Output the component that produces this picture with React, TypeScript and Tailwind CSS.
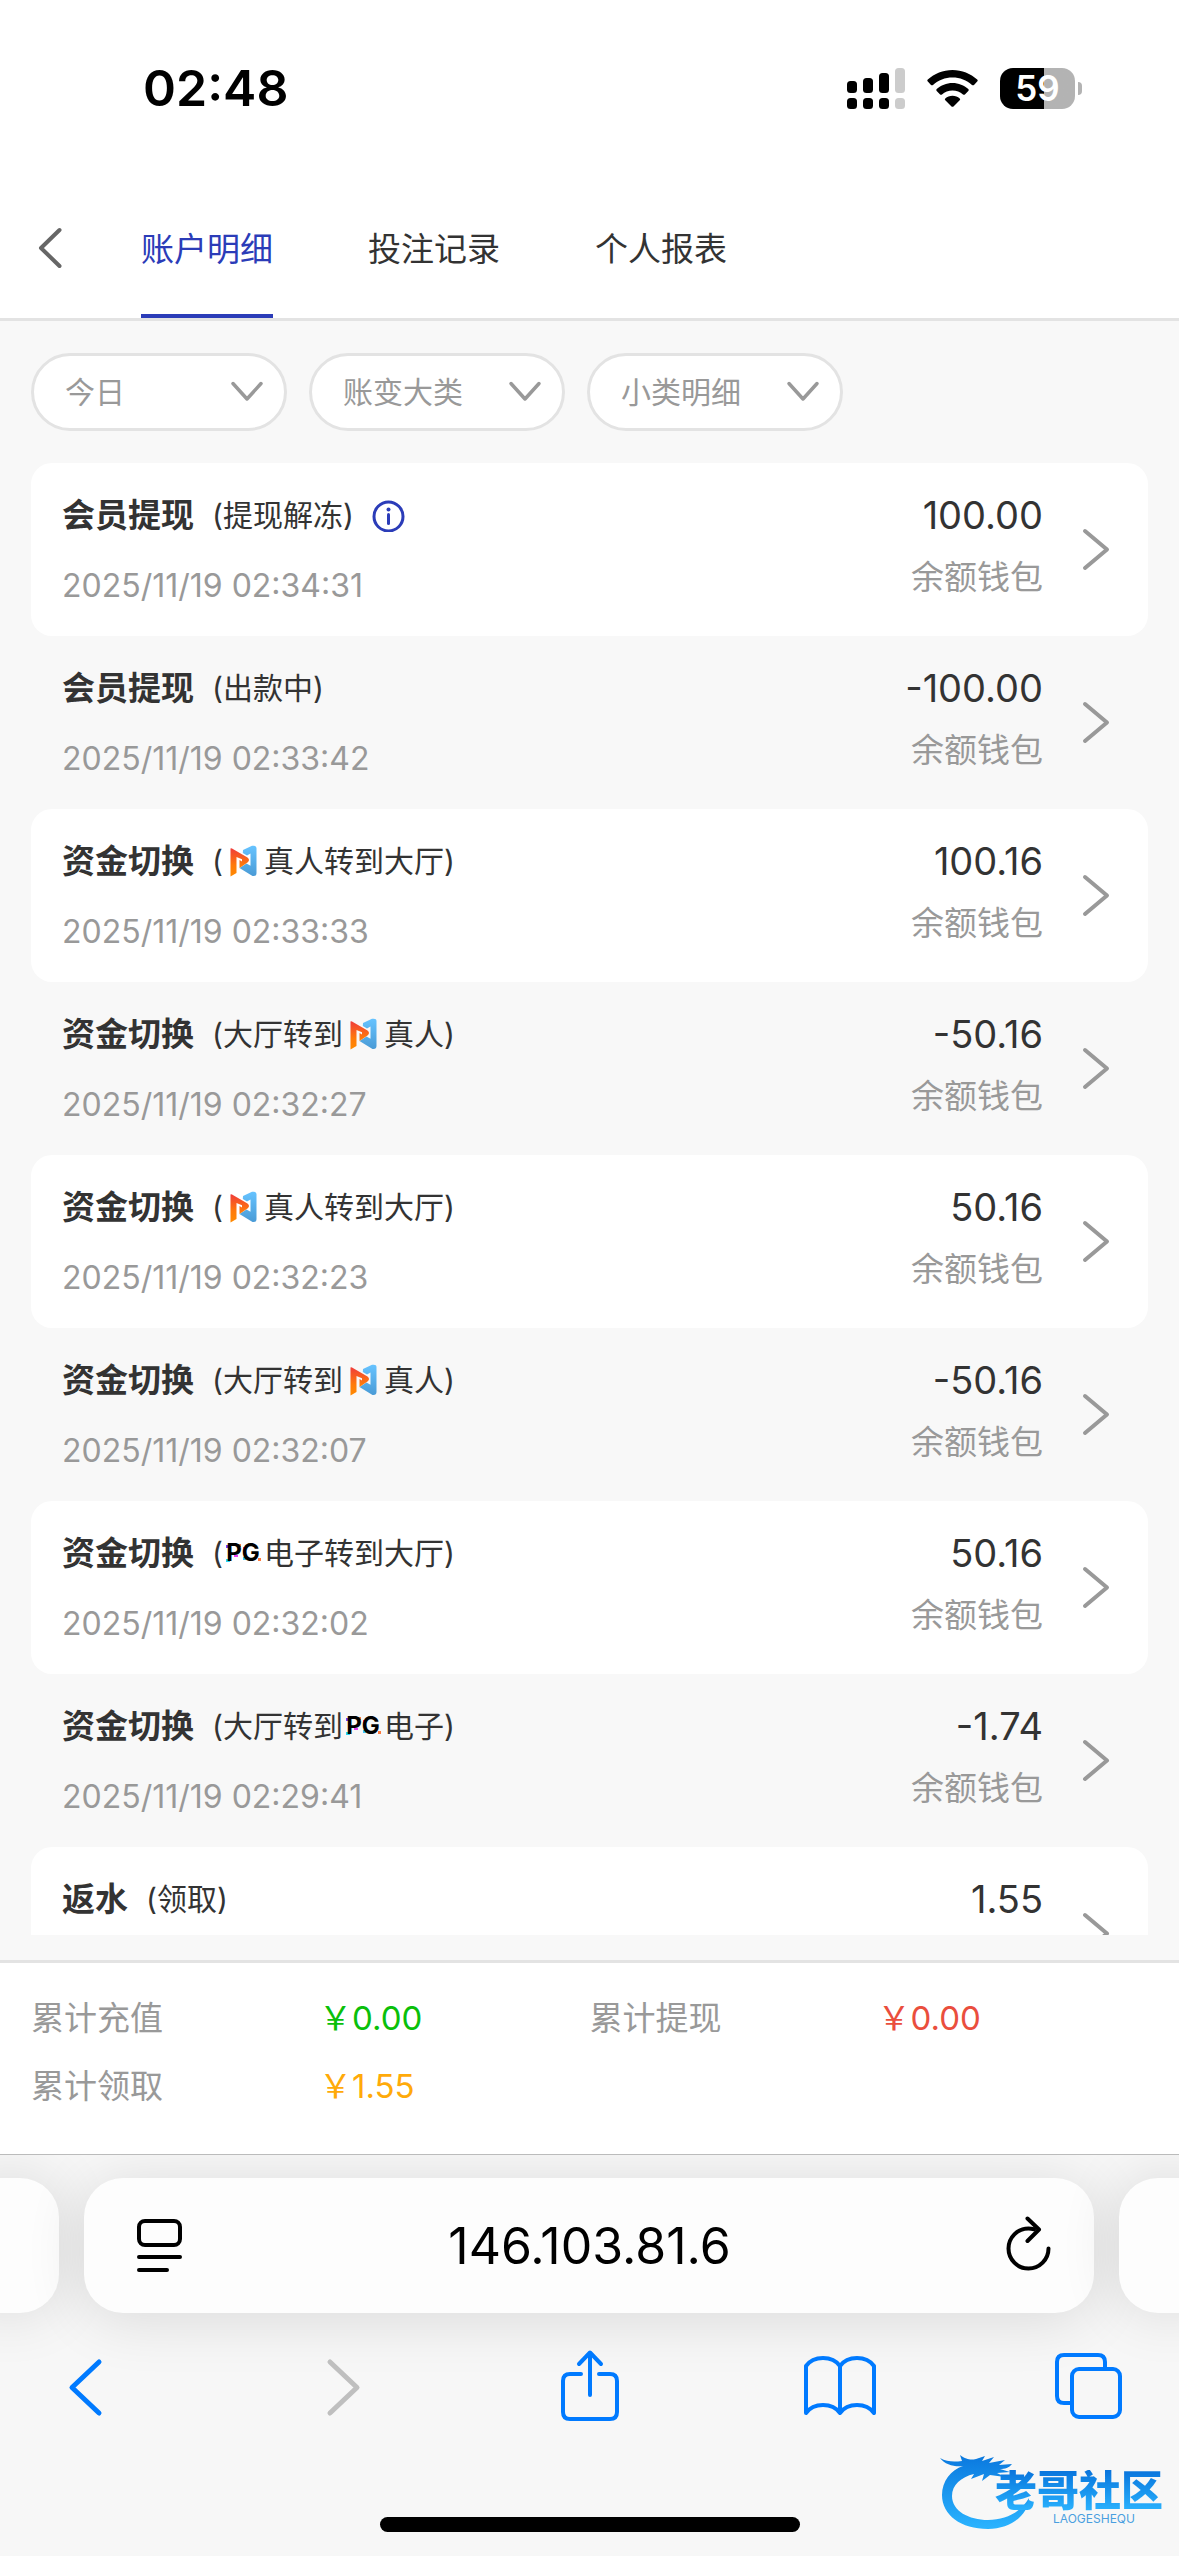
import { useState, type ReactNode } from "react";
import clsx from "clsx";

type Provider = "live" | "pg";

type Transaction = {
  title: string;
  before?: string;
  provider?: Provider;
  after?: string;
  hasInfo?: boolean;
  time: string;
  amount: string;
};

const TABS = ["账户明细", "投注记录", "个人报表"];

const FILTERS = [
  { id: "date", label: "日期", value: "今日" },
  { id: "category", label: "大类", value: "账变大类" },
  { id: "subcategory", label: "小类", value: "小类明细" },
];

const TRANSACTIONS: Transaction[] = [
  { title: "会员提现", before: "提现解冻", hasInfo: true, time: "2025/11/19 02:34:31", amount: "100.00" },
  { title: "会员提现", before: "出款中", time: "2025/11/19 02:33:42", amount: "-100.00" },
  { title: "资金切换", provider: "live", after: "真人转到大厅", time: "2025/11/19 02:33:33", amount: "100.16" },
  { title: "资金切换", before: "大厅转到", provider: "live", after: "真人", time: "2025/11/19 02:32:27", amount: "-50.16" },
  { title: "资金切换", provider: "live", after: "真人转到大厅", time: "2025/11/19 02:32:23", amount: "50.16" },
  { title: "资金切换", before: "大厅转到", provider: "live", after: "真人", time: "2025/11/19 02:32:07", amount: "-50.16" },
  { title: "资金切换", provider: "pg", after: "电子转到大厅", time: "2025/11/19 02:32:02", amount: "50.16" },
  { title: "资金切换", before: "大厅转到", provider: "pg", after: "电子", time: "2025/11/19 02:29:41", amount: "-1.74" },
  { title: "返水", before: "领取", time: "", amount: "1.55" },
];

const TOTALS = [
  { label: "累计充值", value: "0.00", color: "text-[#0abf0a]" },
  { label: "累计提现", value: "0.00", color: "text-[#ea4e3d]" },
  { label: "累计领取", value: "1.55", color: "text-[#ffaa09]" },
];

function StatusBar() {
  return (
    <div className="flex h-[177px] shrink-0 items-start justify-between pt-[58px] pr-[97px] pl-[143px]">
      <span className="text-[50px] leading-[60px] font-semibold text-black">02:48</span>
      <div className="flex h-[60px] items-center gap-[22px]">
        <svg width="58" height="41" viewBox="0 0 58 41" aria-hidden="true">
          <rect x="0" y="13" width="10" height="12" rx="3.5" />
          <rect x="16" y="10" width="10" height="15" rx="3.5" />
          <rect x="32" y="5" width="10" height="20" rx="3.5" />
          <rect x="48" y="0" width="10" height="25" rx="3.5" fill="#ccc" />
          <rect x="0" y="30" width="10" height="11" rx="3.5" />
          <rect x="16" y="30" width="10" height="11" rx="3.5" />
          <rect x="32" y="30" width="10" height="11" rx="3.5" />
          <rect x="48" y="30" width="10" height="11" rx="3.5" fill="#ccc" />
        </svg>
        <svg width="51" height="37" viewBox="0 0 51 37" aria-hidden="true">
          <path d="M25.500 0C35 0 43.600 3.600 50.200 9.600Q51.200 10.600 50.200 11.600L47 14.900Q46 15.800 45 14.900C39.700 10.200 32.900 7.600 25.500 7.600S11.300 10.200 6 14.900Q5 15.800 4 14.900L.8 11.600Q-.2 10.600.8 9.600C7.400 3.600 16 0 25.500 0Z" />
          <path d="M25.500 12.900C31.600 12.900 37.100 15.200 41.300 19Q42.300 20 41.300 21L37.900 24.400Q37 25.300 36 24.400C33.200 22 29.500 20.500 25.500 20.500S17.800 22 15 24.400Q14 25.300 13.100 24.400L9.700 21Q8.700 20 9.700 19C13.900 15.200 19.400 12.900 25.500 12.900Z" />
          <path d="M25.500 25.700C28.300 25.700 30.800 26.700 32.700 28.400Q33.600 29.300 32.700 30.200L26.500 36.400Q25.500 37.300 24.500 36.400L18.300 30.200Q17.400 29.300 18.300 28.400C20.200 26.700 22.700 25.700 25.500 25.700Z" />
        </svg>
        <div className="flex items-center gap-[3px]">
          <div className="flex h-[41px] w-[75px] items-center justify-center rounded-[13px] bg-linear-to-r from-black from-59% to-[#b3b3b3] to-59% text-[35px] leading-[41px] font-semibold text-white">
            59
          </div>
          <div className="h-[13px] w-[4px] rounded-r-full bg-[#b3b3b3]" />
        </div>
      </div>
    </div>
  );
}

function LiveLogo() {
  return (
    <svg className="mx-[7px] h-[32px] w-[27px] shrink-0" viewBox="0 0 27 32" aria-hidden="true">
      <defs>
        <linearGradient id="live-blue" x1="0" y1="0" x2="0" y2="1">
          <stop offset="0" stopColor="#66c3ff" />
          <stop offset="1" stopColor="#4a9bd6" />
        </linearGradient>
        <linearGradient id="live-red" x1="0" y1="0" x2="0" y2="1">
          <stop offset="0" stopColor="#f03c3a" />
          <stop offset="0.600" stopColor="#ff7a0a" />
          <stop offset="1" stopColor="#ff8a00" />
        </linearGradient>
      </defs>
      <path d="M13 5L22 .8Q26.500 0 26.500 3V28Q26.500 31.500 22.500 31L9.500 23L16.500 18.500L20.500 20.800V8.500L17 10.500L12.800 8Z" fill="url(#live-blue)" />
      <path d="M.5 3.500Q1 3 2 3.500L17.500 12.500Q20.500 15 17.500 17.500L9.500 23V15L12 16.500V14.200L6.500 12V28L.5 31.500Z" fill="url(#live-red)" />
    </svg>
  );
}

function PgLogo() {
  return (
    <svg className="h-[32px] w-[41px] shrink-0" viewBox="0 0 41 32" role="img" aria-label="PG">
      <path d="M3 8h4v3h-4z" fill="#7a3cff" />
      <path d="M14 7h4v3h-4z" fill="#ff7a3c" />
      <path d="M3 22h4v3h-4z" fill="#29d3f5" />
      <path d="M11 18h4v2h-4z" fill="#e83cf0" />
      <path d="M25 6h4v3h-4z" fill="#ffd43c" />
      <path d="M20 10h3v4h-3z" fill="#ff3c8c" />
      <path d="M20 20h3v3h-3z" fill="#3cc4ff" />
      <path d="M35 21h3v3h-3z" fill="#ff7a3c" />
      <text x="20" y="24" textAnchor="middle" className="fill-black text-[24px] font-bold">
        PG
      </text>
    </svg>
  );
}

function TransactionRow({ item, striped }: { item: Transaction; striped: boolean }) {
  return (
    <li
      className={clsx(
        "flex shrink-0 items-center rounded-[21px] pt-[28px] pr-[36px] pb-[26px] pl-[31px]",
        striped && "bg-white",
      )}
    >
      <div className="flex min-w-0 flex-1 flex-col gap-[23px]">
        <div className="flex h-[48px] items-center text-[#333]">
          <h2 className="mr-[18px] text-[33px] leading-[48px] font-bold">{item.title}</h2>
          <div className="flex items-center text-[30px] leading-[48px]">
            <span>({item.before}</span>
            {item.provider === "live" ? <LiveLogo /> : null}
            {item.provider === "pg" ? <PgLogo /> : null}
            <span>{item.after})</span>
          </div>
          {item.hasInfo ? (
            <button type="button" aria-label="说明" className="ml-[18px]">
              <svg width="33" height="33" viewBox="0 0 33 33" fill="none" stroke="#2b3cb8" aria-hidden="true">
                <circle cx="16.500" cy="17.500" r="14.500" strokeWidth="3" />
                <path d="M16.500 15.500v9" strokeWidth="3" strokeLinecap="round" />
                <circle cx="16.500" cy="10.500" r="2" fill="#2b3cb8" stroke="none" />
              </svg>
            </button>
          ) : null}
        </div>
        <time className="h-[48px] text-[32px] leading-[48px] text-[#999]">{item.time}</time>
      </div>
      <div className="flex flex-col gap-[14px] self-start text-right">
        <span className="text-[38px] leading-[48px] text-[#333]">{item.amount}</span>
        <span className="text-[33px] leading-[48px] text-[#999]">余额钱包</span>
      </div>
      <button type="button" aria-label="查看详情" className="ml-[38px]">
        <svg width="31" height="45" viewBox="0 0 31 45" fill="none" stroke="#999" strokeWidth="4" strokeLinecap="round" strokeLinejoin="round" aria-hidden="true">
          <path d="M4 3L26 21.500L4 40" />
        </svg>
      </button>
    </li>
  );
}

function BrandMark() {
  return (
    <div className="absolute right-[16px] bottom-[22px] flex h-[82px] w-[224px] justify-end">
      <svg className="absolute top-0 left-0" width="100" height="82" viewBox="0 0 100 82" aria-hidden="true">
        <defs>
          <linearGradient id="brand-blue" x1="0" y1="0" x2="0" y2="1">
            <stop offset="0" stopColor="#0a78de" />
            <stop offset="1" stopColor="#2bb4ff" />
          </linearGradient>
        </defs>
        <path
          d="M1 6C8 10 15 10 23 9L21 3C28 8 32 8 37 7L46 4L43 9L55 5L50 11L66 8L60 13L73 12C70 16 66 17 61 17L71 20L58 21L66 25L51 23L43 29L45 22L32 27L35 22C22 25 13 33 13 44C13 59 30 68 49 68C67 68 82 60 90 46C89 63 72 77 49 77C22 77 3 63 3 43C3 29 12 18 24 14C16 15 6 13 1 6Z"
          fill="url(#brand-blue)"
        />
      </svg>
      <div className="relative flex flex-col items-center pt-[18px]">
        <span className="bg-linear-to-b from-[#0a74dc] to-[#2bb4ff] bg-clip-text text-[42px] leading-[42px] font-black text-transparent">
          老哥社区
        </span>
        <span className="pl-[30px] text-[12px] leading-[14px] text-[#4a9fe0]">LAOGESHEQU</span>
      </div>
    </div>
  );
}

function ToolbarButton({ label, disabled, children }: { label: string; disabled?: boolean; children: ReactNode }) {
  return (
    <button type="button" aria-label={label} disabled={disabled} className="text-[#007aff] disabled:text-[#bfbfbf]">
      <svg width="76" height="76" viewBox="0 0 76 76" fill="none" stroke="currentColor" strokeWidth="4" strokeLinecap="round" strokeLinejoin="round" aria-hidden="true">
        {children}
      </svg>
    </button>
  );
}

function BrowserBar() {
  return (
    <footer className="relative shrink-0 overflow-hidden border-t border-[#bbb] bg-[#f7f7f7]">
      <div className="flex justify-center gap-[25px] pt-[23px]">
        <div className="-ml-[40px] h-[135px] w-[99px] shrink-0 rounded-[39px] bg-[#fdfdfd] shadow-[0_0_60px_rgba(0,0,0,0.12)]" />
        <div className="flex h-[135px] flex-1 items-center rounded-[39px] bg-[#fdfdfd] pr-[40px] pl-[50px] shadow-[0_6px_60px_rgba(0,0,0,0.12)]">
          <button type="button" aria-label="页面菜单">
            <svg width="51" height="60" viewBox="0 0 51 60" fill="none" stroke="#000" strokeWidth="4" strokeLinecap="round" aria-hidden="true">
              <rect x="5" y="5" width="41" height="24" rx="6" />
              <path d="M5 41h41M5 54h28" />
            </svg>
          </button>
          <input
            type="text"
            aria-label="网址"
            defaultValue="146.103.81.6"
            className="min-w-0 flex-1 pr-[9px] text-center text-[50px] leading-[60px] text-black outline-none"
          />
          <button type="button" aria-label="重新载入">
            <svg width="51" height="60" viewBox="0 0 51 60" fill="none" stroke="#000" strokeWidth="4" strokeLinecap="round" strokeLinejoin="round" aria-hidden="true">
              <path d="M31 13.200C29 12.700 27.500 12.500 25.500 12.500A20 20 0 1 0 45.500 32.500" />
              <path d="M24.500 2.500L36 13.500L24.500 25" />
            </svg>
          </button>
        </div>
        <div className="-mr-[40px] h-[135px] w-[100px] shrink-0 rounded-[39px] bg-[#fdfdfd] shadow-[0_0_60px_rgba(0,0,0,0.12)]" />
      </div>
      <div className="flex justify-between px-[50px] pt-[36px]">
        <ToolbarButton label="后退">
          <path d="M49 13L22 38.500L49 64" strokeWidth="5" />
        </ToolbarButton>
        <ToolbarButton label="前进" disabled>
          <path d="M29 13L56 38.500L29 64" strokeWidth="5" />
        </ToolbarButton>
        <ToolbarButton label="分享">
          <path d="M29 25H18Q11 25 11 32V63Q11 70 18 70H58Q65 70 65 63V32Q65 25 58 25H47" />
          <path d="M38 46V4M27 15L38 3.500L49 15" />
        </ToolbarButton>
        <ToolbarButton label="书签">
          <path d="M38 17C33 10 26 9 21 9S9 10 4 17V64C9 57 16 56 21 56S33 57 38 64C43 57 50 56 55 56S67 57 72 64V17C67 10 60 9 55 9S43 10 38 17ZM38 17V64" />
        </ToolbarButton>
        <ToolbarButton label="标签页">
          <path d="M18 54H11Q4 54 4 47V13Q4 6 11 6H45Q52 6 52 13V20" />
          <rect x="19" y="20" width="48" height="48" rx="7" />
        </ToolbarButton>
      </div>
      <div className="flex justify-center pt-[92px] pb-[24px]">
        <div className="h-[15px] w-[420px] rounded-full bg-black" />
      </div>
      <BrandMark />
    </footer>
  );
}

export default function App() {
  const [activeTab, setActiveTab] = useState(TABS[0]);

  return (
    <div className="flex h-screen flex-col overflow-hidden bg-[#f8f8f8] font-['Inter','Noto_Sans_CJK_SC',sans-serif]">
      <header className="shrink-0 border-b-[3px] border-[#e3e3e3] bg-white">
        <StatusBar />
        <nav className="flex h-[141px] items-stretch">
          <button type="button" aria-label="返回" className="mr-[76px] ml-[35px]">
            <svg width="30" height="45" viewBox="0 0 30 45" fill="none" stroke="#666" strokeWidth="4" strokeLinecap="round" strokeLinejoin="round" aria-hidden="true">
              <path d="M24.500 5L6 23L24.500 41" />
            </svg>
          </button>
          <div className="flex gap-[95px]">
            {TABS.map((tab) => (
              <button
                key={tab}
                type="button"
                onClick={() => setActiveTab(tab)}
                className={clsx(
                  "border-b-4 pt-2 text-[33px]",
                  tab === activeTab ? "border-[#2b3cb8] text-[#2b3cb8]" : "border-transparent text-[#333]",
                )}
              >
                {tab}
              </button>
            ))}
          </div>
        </nav>
      </header>

      <div className="flex shrink-0 gap-[22px] px-[31px] py-[32px]">
        {FILTERS.map((filter) => (
          <div key={filter.id} className="relative">
            <select
              id={filter.id}
              aria-label={filter.label}
              className="h-[78px] w-[256px] appearance-none rounded-full border-[3px] border-[#e3e3e3] bg-white pl-[31px] text-[30px] text-[#999]"
            >
              <option>{filter.value}</option>
            </select>
            <svg className="pointer-events-none absolute top-[26px] right-[22px]" width="36" height="26" viewBox="0 0 36 26" fill="none" stroke="#999" strokeWidth="3.500" strokeLinecap="round" strokeLinejoin="round" aria-hidden="true">
              <path d="M4 4.500L18 20L32 4.500" />
            </svg>
          </div>
        ))}
      </div>

      <main className="mb-[25px] min-h-0 flex-1 overflow-hidden px-[31px]">
        <ul className="flex flex-col">
          {TRANSACTIONS.map((item, index) => (
            <TransactionRow key={index} item={item} striped={index % 2 === 0} />
          ))}
        </ul>
      </main>

      <dl className="grid shrink-0 grid-cols-2 gap-y-[20px] border-t-[3px] border-[#e3e3e3] bg-white px-[31px] pt-[31px] pb-[44px] text-[33px] leading-[48px]">
        {TOTALS.map((total) => (
          <div key={total.label} className="flex">
            <dt className="w-[288px] text-[#999]">{total.label}</dt>
            <dd className={total.color}>￥{total.value}</dd>
          </div>
        ))}
      </dl>

      <BrowserBar />
    </div>
  );
}
